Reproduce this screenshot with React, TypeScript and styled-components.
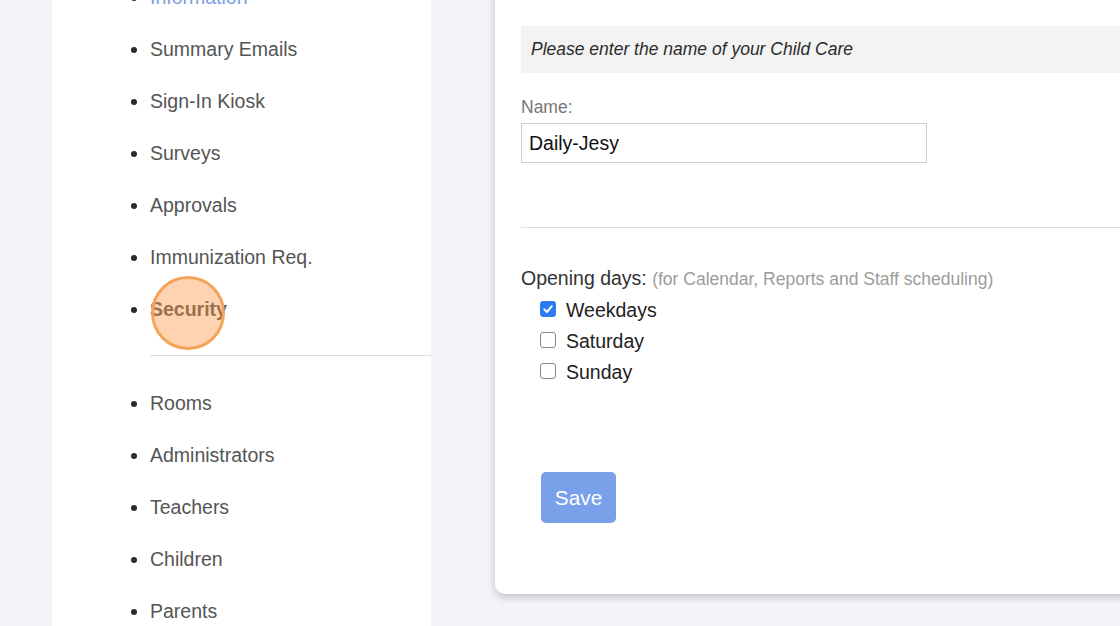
import React from 'react';
import styled, { createGlobalStyle } from 'styled-components';

const Global = createGlobalStyle`
  html, body { margin: 0; padding: 0; }
  body {
    background: #f4f5fa;
    font-family: "Liberation Sans", Arial, Helvetica, sans-serif;
    width: 1120px;
    height: 626px;
    overflow: hidden;
  }
`;

const Page = styled.div`
  display: flex;
  align-items: flex-start;
  gap: 64px;
  padding-left: 52px;
  margin-top: -60px;
  height: 760px;
`;

const Sidebar = styled.nav`
  flex: none;
  width: 379px;
  align-self: stretch;
  background: #fff;
`;

const NavList = styled.ul`
  margin: 0;
  padding: 31px 0 0 98px;
  list-style: disc;
`;

const NavItem = styled.li<{ $active?: boolean; $link?: boolean }>`
  position: relative;
  line-height: 52px;
  font-size: 19.5px;
  color: ${p => (p.$link ? '#7a9ee0' : '#555')};
  font-weight: ${p => (p.$active ? 700 : 400)};
  &::marker { color: #2a2a2a; }
`;

const NavDivider = styled.li`
  list-style: none;
  height: 1px;
  background: #dcdcdc;
  margin: 20px 0 21px;
`;

const Highlight = styled.span`
  position: absolute;
  left: 1px;
  top: -7px;
  width: 74px;
  height: 74px;
  box-sizing: border-box;
  border-radius: 50%;
  border: 3px solid #f6a35a;
  background: rgba(250, 150, 70, 0.42);
  pointer-events: none;
`;

const Card = styled.section`
  flex: none;
  width: 720px;
  background: #fff;
  border-radius: 0 0 0 10px;
  box-shadow: 0 3px 10px rgba(0, 0, 0, 0.22);
  padding: 86px 26px 71px;
`;

const Notice = styled.div`
  height: 47px;
  display: flex;
  align-items: center;
  padding-left: 10px;
  background: #f3f3f3;
  font-style: italic;
  font-size: 17.5px;
  color: #2b2b2b;
`;

const FieldLabel = styled.label`
  display: block;
  margin-top: 24px;
  font-size: 17.5px;
  line-height: 20px;
  color: #777;
`;

const TextInput = styled.input`
  display: block;
  margin-top: 6px;
  box-sizing: border-box;
  width: 406px;
  height: 40px;
  padding: 0 7px;
  border: 1px solid #cfcfcf;
  font-family: inherit;
  font-size: 19.5px;
  color: #111;
  outline: none;
`;

const Rule = styled.hr`
  margin: 64px 0 0;
  border: none;
  height: 1px;
  background: #dcdcdc;
`;

const SectionTitle = styled.div`
  margin-top: 39px;
  font-size: 19.5px;
  line-height: 22px;
  color: #333;
`;

const Hint = styled.span`
  font-size: 17.5px;
  color: #9c9c9c;
`;

const Options = styled.div`
  margin-top: 5px;
  padding-left: 19px;
  display: flex;
  flex-direction: column;
`;

const Option = styled.label`
  display: flex;
  align-items: center;
  gap: 10px;
  height: 31px;
  font-size: 19.5px;
  color: #222;
`;

const Box = styled.span<{ $checked?: boolean }>`
  display: inline-flex;
  align-items: center;
  justify-content: center;
  width: 16px;
  height: 16px;
  margin-top: -3px;
  box-sizing: border-box;
  border-radius: 3px;
  background: ${p => (p.$checked ? '#2c7bf2' : '#fff')};
  border: 1px solid ${p => (p.$checked ? '#2c7bf2' : '#8a8a8a')};
`;

const SaveButton = styled.button`
  display: block;
  margin: 84px 0 0 20px;
  width: 75px;
  height: 51px;
  padding: 0;
  border: none;
  border-radius: 5px;
  background: #7ba0ea;
  color: #fff;
  font-family: inherit;
  font-size: 20.8px;
`;

const Check = ({ checked }: { checked?: boolean }) => (
  <Box $checked={checked}>
    {checked && (
      <svg width="12" height="12" viewBox="0 0 12 12">
        <path d="M2.3 6.4 L4.9 9 L9.8 3.2" fill="none" stroke="#fff" strokeWidth="2" strokeLinecap="round" strokeLinejoin="round" />
      </svg>
    )}
  </Box>
);

const topItems = ['Summary Emails', 'Sign-In Kiosk', 'Surveys', 'Approvals', 'Immunization Req.'];
const bottomItems = ['Rooms', 'Administrators', 'Teachers', 'Children', 'Parents'];

export default function App() {
  return (
    <>
      <Global />
      <Page>
        <Sidebar>
          <NavList>
            <NavItem $link>Information</NavItem>
            {topItems.map(t => (
              <NavItem key={t}>{t}</NavItem>
            ))}
            <NavItem $active>
              Security
              <Highlight />
            </NavItem>
            <NavDivider />
            {bottomItems.map(t => (
              <NavItem key={t}>{t}</NavItem>
            ))}
          </NavList>
        </Sidebar>
        <Card>
          <Notice>Please enter the name of your Child Care</Notice>
          <FieldLabel htmlFor="name">Name:</FieldLabel>
          <TextInput id="name" defaultValue="Daily-Jesy" />
          <Rule />
          <SectionTitle>
            Opening days: <Hint>(for Calendar, Reports and Staff scheduling)</Hint>
          </SectionTitle>
          <Options>
            <Option><Check checked />Weekdays</Option>
            <Option><Check />Saturday</Option>
            <Option><Check />Sunday</Option>
          </Options>
          <SaveButton>Save</SaveButton>
        </Card>
      </Page>
    </>
  );
}
